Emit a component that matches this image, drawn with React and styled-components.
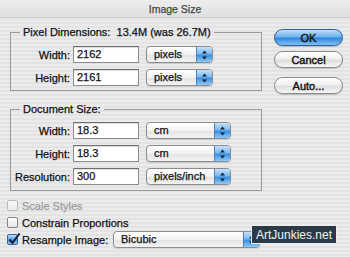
import React from 'react';
import styled, { createGlobalStyle } from 'styled-components';

const GlobalStyle = createGlobalStyle`
  html, body {
    margin: 0;
    padding: 0;
    background: #e6e6e6;
  }
  body {
    font-family: "Liberation Sans", Arial, sans-serif;
    font-size: 11px;
    color: #111;
    -webkit-text-stroke: 0.25px currentColor;
  }
`;

const Window = styled.div`
  position: relative;
  width: 350px;
  height: 257px;
  overflow: hidden;
  background: repeating-linear-gradient(to bottom, #ebebeb 0, #ebebeb 2px, #e3e3e3 2px, #e3e3e3 4px);
`;

const TitleBar = styled.div`
  height: 18px;
  display: flex;
  align-items: center;
  justify-content: center;
  font-size: 10.5px;
  color: #474747;
  background: linear-gradient(to bottom, #eeeeee, #dedede);
  border-bottom: 1px solid #cfcfcf;
  box-sizing: border-box;
`;

const Body = styled.div`
  display: flex;
  padding: 7px 0 0 7px;
`;

const LeftCol = styled.div`
  width: 256px;
  display: flex;
  flex-direction: column;
`;

const Group = styled.fieldset`
  margin: ${p => (p.$first ? '0' : '11px')} 0 0 3px;
  width: 252px;
  box-sizing: border-box;
  border: 1px solid #9a9a9a;
  padding: ${p => p.$pad};
  display: flex;
  flex-direction: column;
  gap: 6px;
`;

const Legend = styled.legend`
  margin-left: 9px;
  padding: 0 3px;
  line-height: 14px;
  white-space: pre;
`;

const FieldRow = styled.div`
  display: flex;
  align-items: center;
  height: 17px;
`;

const Label = styled.span`
  width: 59px;
  text-align: right;
  margin-right: 3px;
`;

const Input = styled.div`
  width: 66px;
  height: 17px;
  box-sizing: border-box;
  border: 1px solid #8c8c8c;
  border-top-color: #6f6f6f;
  background: #fff;
  box-shadow: inset 0 1px 1px rgba(0, 0, 0, 0.15);
  padding-left: 3px;
  line-height: 15px;
  margin-right: 7px;
`;

const Popup = styled.div`
  width: ${p => p.$w}px;
  height: 17px;
  box-sizing: border-box;
  display: flex;
  border: 1px solid #8d8d8d;
  border-radius: 4px;
  overflow: hidden;
  background: linear-gradient(to bottom, #ffffff 0%, #f2f2f2 50%, #e2e2e2 51%, #f4f4f4 100%);
  box-shadow: 0 1px 1px rgba(0, 0, 0, 0.12);
`;

const PopupText = styled.span`
  flex: 1;
  padding-left: 7px;
  line-height: 15px;
`;

const Arrows = styled.span`
  width: 15px;
  display: flex;
  align-items: center;
  justify-content: center;
  border-left: 1px solid #4c7fbd;
  background: linear-gradient(to bottom, #c6e2fb 0%, #7ab8ef 45%, #3c8fe0 55%, #8ccaf8 100%);
`;

const ButtonCol = styled.div`
  margin: 4px 0 0 11px;
  width: 69px;
  display: flex;
  flex-direction: column;
`;

const PillButton = styled.div`
  height: 17px;
  margin-top: ${p => p.$mt}px;
  box-sizing: border-box;
  border-radius: 9px;
  display: flex;
  align-items: center;
  justify-content: center;
  border: 1px solid ${p => (p.$primary ? '#2f5f98' : '#8a8a8a')};
  background: ${p =>
    p.$primary
      ? 'linear-gradient(to bottom, #bfe0fb 0%, #6fb1ec 45%, #3187dc 55%, #7ec3f6 100%)'
      : 'linear-gradient(to bottom, #ffffff 0%, #f1f1f1 45%, #dedede 55%, #f6f6f6 100%)'};
  box-shadow: 0 1px 1px rgba(0, 0, 0, 0.18);
  color: #111;
  -webkit-text-stroke: 0.4px currentColor;
`;

const Checks = styled.div`
  margin-top: 6px;
  display: flex;
  flex-direction: column;
`;

const CheckRow = styled.div`
  display: flex;
  align-items: center;
  height: 17px;
  color: ${p => (p.$disabled ? '#9c9c9c' : '#111')};
`;

const Box = styled.span`
  position: relative;
  width: 11px;
  height: 11px;
  box-sizing: border-box;
  margin-right: 4px;
  border-radius: 2px;
  border: 1px solid ${p => (p.$disabled ? '#bdbdbd' : p.$checked ? '#3b649c' : '#858585')};
  background: ${p =>
    p.$checked
      ? 'linear-gradient(to bottom, #bcdcf8, #4d9ae4 55%, #8cc6f5)'
      : p.$disabled
      ? 'linear-gradient(to bottom, #f7f7f7, #ebebeb)'
      : 'linear-gradient(to bottom, #ffffff, #e4e4e4)'};
`;

const Tick = styled.svg`
  position: absolute;
  left: 0;
  top: -3px;
`;

const ResampleLabel = styled.span`
  width: 91px;
`;

const Watermark = styled.div`
  position: absolute;
  left: 251px;
  top: 225px;
  width: 86px;
  height: 19px;
  box-sizing: border-box;
  border: 1px solid #e8eef2;
  background: #2b3a47;
  color: #f2f2f2;
  font-size: 12px;
  -webkit-text-stroke: 0;
  display: flex;
  align-items: center;
  justify-content: center;
`;

const UpDown = () => (
  <svg width="7" height="10" viewBox="0 0 7 10">
    <path d="M3.5 0.5 L6 3.5 H1 Z" fill="#10213f" />
    <path d="M3.5 9.5 L6 6.5 H1 Z" fill="#10213f" />
  </svg>
);

const Select = ({ w, children }) => (
  <Popup $w={w}>
    <PopupText>{children}</PopupText>
    <Arrows>
      <UpDown />
    </Arrows>
  </Popup>
);

const Field = ({ label, value, unit, w }) => (
  <FieldRow>
    <Label>{label}</Label>
    <Input>{value}</Input>
    <Select w={w}>{unit}</Select>
  </FieldRow>
);

const Check = ({ checked, disabled, children }) => (
  <CheckRow $disabled={disabled}>
    <Box $checked={checked} $disabled={disabled}>
      {checked && (
        <Tick width="13" height="13" viewBox="0 0 13 13">
          <path d="M1.5 7.5 L4.5 11 L11.5 1.5" stroke="#0e1a33" strokeWidth="2" fill="none" />
        </Tick>
      )}
    </Box>
    {children}
  </CheckRow>
);

export default function App() {
  return (
    <>
      <GlobalStyle />
      <Window>
        <TitleBar>Image Size</TitleBar>
        <Body>
          <LeftCol>
            <Group $first $pad="7px 0 4px 0">
              <Legend>{'Pixel Dimensions:  13.4M (was 26.7M)'}</Legend>
              <Field label="Width:" value="2162" unit="pixels" w={67} />
              <Field label="Height:" value="2161" unit="pixels" w={67} />
            </Group>
            <Group $pad="6px 0 5px 0">
              <Legend>Document Size:</Legend>
              <Field label="Width:" value="18.3" unit="cm" w={85} />
              <Field label="Height:" value="18.3" unit="cm" w={85} />
              <Field label="Resolution:" value="300" unit="pixels/inch" w={85} />
            </Group>
            <Checks>
              <Check disabled>Scale Styles</Check>
              <Check>Constrain Proportions</Check>
              <Check checked>
                <ResampleLabel>Resample Image:</ResampleLabel>
                <Select w={147}>Bicubic</Select>
              </Check>
            </Checks>
          </LeftCol>
          <ButtonCol>
            <PillButton $primary $mt={0}>OK</PillButton>
            <PillButton $mt={5}>Cancel</PillButton>
            <PillButton $mt={9}>Auto...</PillButton>
          </ButtonCol>
        </Body>
        <Watermark>ArtJunkies.net</Watermark>
      </Window>
    </>
  );
}
